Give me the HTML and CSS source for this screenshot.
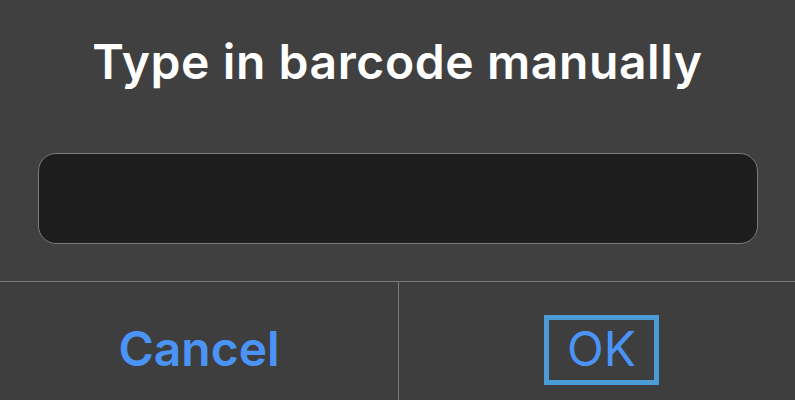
FILE: index.html
```html
<!DOCTYPE html>
<html lang="en">
<head>
<meta charset="utf-8">
<title>Type in barcode manually</title>
<link rel="stylesheet" href="styles.css">
</head>
<body>
  <div class="alert">
    <h1 class="alert-title">Type in barcode manually</h1>
    <div class="alert-field">
      <input class="alert-input" type="text" aria-label="Barcode">
    </div>
    <div class="alert-actions">
      <div class="action action-cancel"><span class="action-label">Cancel</span></div>
      <div class="action action-ok"><span class="action-label ok-label">OK</span></div>
    </div>
  </div>
</body>
</html>
```
FILE: styles.css
```css
html, body {
  margin: 0;
  padding: 0;
  background: #404040;
}

body {
  width: 795px;
  height: 400px;
  overflow: hidden;
  font-family: Inter, "Noto Sans", "Liberation Sans", sans-serif;
}

.alert {
  display: flex;
  flex-direction: column;
  height: 400px;
  background: #404040;
}

.alert-title {
  margin: 0;
  padding-top: 33px;
  font-size: 48px;
  line-height: 58px;
  font-weight: 600;
  color: #ffffff;
  text-align: center;
  letter-spacing: 0.6px;
}

.alert-field {
  padding: 62px 37px 0 38px;
}

.alert-input {
  display: block;
  box-sizing: border-box;
  width: 720px;
  height: 91px;
  margin: 0;
  border: 1px solid #7b7b7b;
  border-radius: 18px;
  background: #1d1d1e;
  outline: none;
  color: #fff;
  font: inherit;
}

.alert-actions {
  margin-top: 37px;
  flex: 1;
  display: grid;
  grid-template-columns: 399px 1fr;
  border-top: 1px solid #7a7a7a;
  background: #3e3e3e;
}

.action {
  display: flex;
  justify-content: center;
  align-items: flex-start;
  font-size: 48px;
  line-height: 58px;
  color: #4b94f7;
}

.action-cancel {
  border-right: 1px solid #7a7a7a;
  padding-top: 38px;
  font-weight: 600;
}

.action-ok {
  padding-top: 33px;
  padding-left: 9px;
  font-weight: 400;
}

.ok-label {
  border: 5px solid #4a9bd6;
  padding: 0 18px 2px;
}
```
